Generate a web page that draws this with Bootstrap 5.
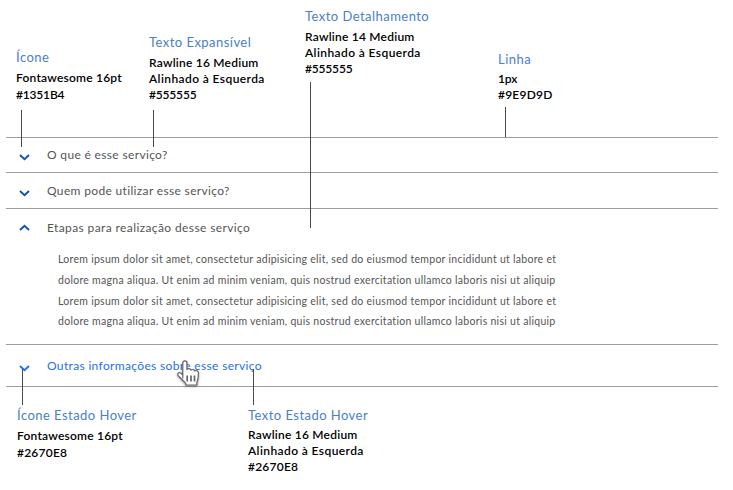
<!DOCTYPE html>
<html lang="pt-BR">
<head>
<meta charset="utf-8">
<meta name="viewport" content="width=device-width, initial-scale=1">
<title>Accordion – especificação</title>
<link href="https://cdn.jsdelivr.net/npm/bootstrap@5.3.0/dist/css/bootstrap.min.css" rel="stylesheet">
<style>
body{font-family:"Lato","Open Sans",sans-serif;background:#fff;color:#000;width:733px;height:490px;overflow:hidden}
.spec-top{height:137px;padding-left:16px}
.spec-bottom{padding:19px 0 0 17px}
.w-a{width:133px}.w-b{width:156px}.w-c{width:193px}.w-d{width:231px}
.drop-0{padding-top:7px}.drop-1{padding-top:33px}.drop-2{padding-top:48px}.drop-3{padding-top:50px}
.note h2{font-size:13px;line-height:18px;font-weight:400;letter-spacing:.46px;color:#4a80c8;margin:0 0 4px;white-space:nowrap}
.drop-2 h2,.drop-3 h2,.spec-bottom h2{margin-bottom:3px}
.note p{font-size:12px;line-height:16.2px;font-weight:600;letter-spacing:.22px;margin:0;white-space:nowrap}
.drop-2 p,.w-d p{line-height:17px}
.note .wide{letter-spacing:.4px}
.note .tight{letter-spacing:-.18px}
/* leader lines run across the accordion */
.leader{position:absolute;width:1px;background:#4a4a4a;z-index:2}
.l-icon{left:5px;top:110px;height:37px}
.l-text{left:4px;top:110px;height:37px}
.l-detail{left:5px;top:82px;height:146px}
.l-rule{left:7px;top:107px;height:30px}
.l-hicon,.l-htext{left:5px;top:-37px;height:36px}
.faq{margin-left:6px;width:712px}
.faq>li{border-top:1px solid #9e9d9d}
.faq>li:last-child{border-bottom:1px solid #9e9d9d}
.faq button{font-size:12px;letter-spacing:.34px;color:#555;line-height:18px;padding:0 0 0 13px;border:0;background:none;width:100%;text-align:left}
.faq .r3 button{letter-spacing:.39px}
.faq svg.chev{width:11px;height:7px;margin-right:17px;fill:none;stroke:#1351b4;stroke-width:1.9}
.r1{height:35px}.r2{height:36px}.r3{height:136px}.r4{height:43px}
.r1 button{padding-top:8px}.r2 button{padding-top:9px}.r3 button{padding-top:10px}.r4 button{padding-top:12px}
.faq .r4 button{color:#2670e8}
.r1 .chev,.r2 .chev,.r4 .chev{margin-top:5px}
.r3 .chev{margin-top:-2px}
.r4 svg.chev{stroke:#2670e8}
.detail{font-size:10.5px;line-height:20.8px;letter-spacing:.285px;color:#555;margin:12px 0 0 52px;white-space:nowrap}
.hand{position:absolute;left:168px;top:13px;width:29px;height:32px;z-index:3;filter:drop-shadow(0 1.5px 1px rgba(0,0,0,.4))}
</style>
<script src="https://cdn.jsdelivr.net/npm/bootstrap@5.3.0/dist/js/bootstrap.bundle.min.js"></script>
</head>
<body>
<header class="spec-top d-flex">
  <section class="note w-a drop-2 position-relative"><h2>Ícone</h2><p>Fontawesome 16pt</p><p class="tight">#1351B4</p><i class="leader l-icon"></i></section>
  <section class="note w-b drop-1 position-relative"><h2>Texto Expansível</h2><p>Rawline 16 Medium</p><p class="wide">Alinhado à Esquerda</p><p class="tight">#555555</p><i class="leader l-text"></i></section>
  <section class="note w-c drop-0 position-relative"><h2>Texto Detalhamento</h2><p>Rawline 14 Medium</p><p class="wide">Alinhado à Esquerda</p><p class="tight">#555555</p><i class="leader l-detail"></i></section>
  <section class="note drop-3 position-relative"><h2>Linha</h2><p class="tight">1px</p><p>#9E9D9D</p><i class="leader l-rule"></i></section>
</header>
<main>
  <ul class="faq list-unstyled mb-0">
    <li class="r1"><button class="d-flex align-items-center"><svg class="chev" viewBox="0 0 11 7"><path d="M1 1l4.5 4.3L10 1"/></svg>O que é esse serviço?</button></li>
    <li class="r2"><button class="d-flex align-items-center"><svg class="chev" viewBox="0 0 11 7"><path d="M1 1l4.5 4.3L10 1"/></svg>Quem pode utilizar esse serviço?</button></li>
    <li class="r3"><button class="d-flex align-items-center"><svg class="chev" viewBox="0 0 11 7"><path d="M1 6l4.5-4.3L10 6"/></svg>Etapas para realização desse serviço</button>
      <p class="detail">Lorem ipsum dolor sit amet, consectetur adipisicing elit, sed do eiusmod tempor incididunt ut labore et<br>dolore magna aliqua. Ut enim ad minim veniam, quis nostrud exercitation ullamco laboris nisi ut aliquip<br>Lorem ipsum dolor sit amet, consectetur adipisicing elit, sed do eiusmod tempor incididunt ut labore et<br>dolore magna aliqua. Ut enim ad minim veniam, quis nostrud exercitation ullamco laboris nisi ut aliquip</p></li>
    <li class="r4 position-relative"><button class="d-flex align-items-center"><svg class="chev" viewBox="0 0 11 7"><path d="M1 1l4.5 4.3L10 1"/></svg>Outras informações sobre esse serviço</button>
      <svg class="hand" viewBox="0 0 28 32"><path d="M8.300 20.500V5.200c0-3 4.100-3 4.100 0v6.300c.6-1.300 3.700-1.200 4 .7.8-1.100 3.500-.9 3.900.8 1.200-1 3.600-.2 3.600 1.800 0 4.700-.3 7-1.500 9.200v3H11.300v-1.600L8.500 22.500 3.700 17.700c-1.400-2.100.7-3.800 2.400-2.700l2.200 2" fill="#fff" stroke="#666" stroke-width="1.200" stroke-linejoin="round"/><path d="M12.700 17.500v6M16.500 17.500v6M20 17.500v6" stroke="#666" stroke-width="1.700"/></svg></li>
  </ul>
</main>
<footer class="spec-bottom d-flex">
  <section class="note w-d position-relative"><h2>Ícone Estado Hover</h2><p>Fontawesome 16pt</p><p>#2670E8</p><i class="leader l-hicon"></i></section>
  <section class="note position-relative"><h2>Texto Estado Hover</h2><p>Rawline 16 Medium</p><p class="wide">Alinhado à Esquerda</p><p>#2670E8</p><i class="leader l-htext"></i></section>
</footer>
</body>
</html>
